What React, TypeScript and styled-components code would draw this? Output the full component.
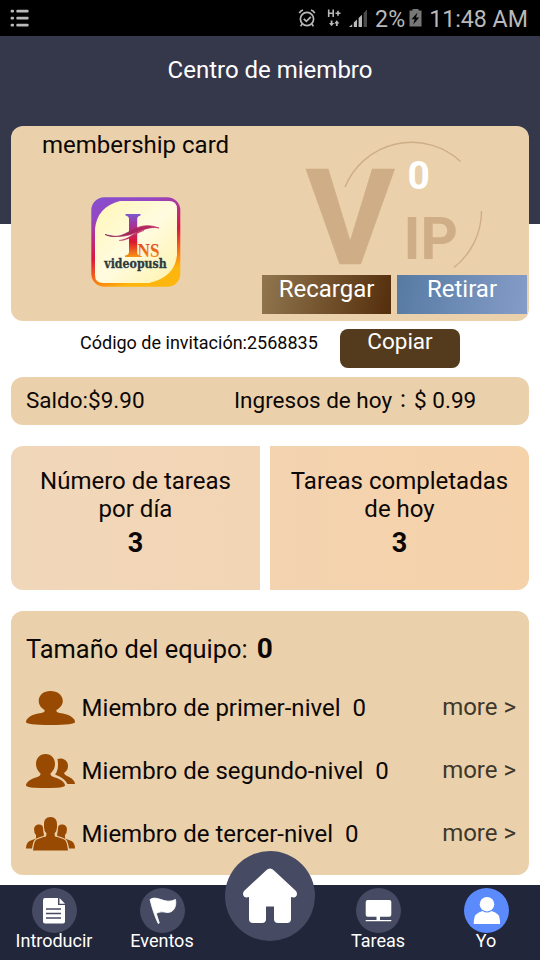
import React from 'react';
import styled, { createGlobalStyle } from 'styled-components';

const GlobalStyle = createGlobalStyle`
  * { box-sizing: border-box; }
  body { margin: 0; background: #fff; font-family: Roboto, "Noto Sans CJK JP", sans-serif; }
  svg { display: block; flex: none; }
`;

const Screen = styled.div`
  width: 540px;
  height: 960px;
  display: flex;
  flex-direction: column;
  overflow: hidden;
  background: #fff;
  color: #0c0705;
`;

const StatusBar = styled.div`
  height: 36px;
  flex: none;
  display: flex;
  align-items: center;
  justify-content: space-between;
  padding: 0 12px 0 10px;
  background: #000;
  color: #b9b9b9;
`;

const StatusGroup = styled.div`
  display: flex;
  align-items: center;
`;

const StatusIconSlot = styled.span<{ $gap: number }>`
  margin-left: ${(p) => p.$gap}px;
`;

const StatusText = styled.span<{ $gap: number }>`
  margin-left: ${(p) => p.$gap}px;
  font-size: 23.2px;
  line-height: 36px;
  padding-top: 2px;
  white-space: nowrap;
`;

const Header = styled.header`
  height: 188px;
  flex: none;
  padding-top: 20px;
  background: #35384b;
  color: #fff;
  text-align: center;
  font-size: 24px;
  line-height: 28px;
`;

const Content = styled.main`
  flex: none;
  height: 759px;
  margin-top: -98px;
  padding: 0 11px;
  display: flex;
  flex-direction: column;
`;

const MemberCard = styled.section`
  height: 195px;
  flex: none;
  display: grid;
  grid-template-columns: 251px 1fr;
  border-radius: 12px;
  background: #ead1ac;
`;

const CardIdentity = styled.div`
  padding-top: 5px;
`;

const CardTitle = styled.div`
  padding-left: 31px;
  font-size: 24px;
  line-height: 28px;
`;

const Logo = styled.svg`
  margin: 38px 0 0 80px;
`;

const CardLevel = styled.div`
  display: flex;
  flex-direction: column;
`;

const Emblem = styled.svg`
  overflow: visible;
`;

const Actions = styled.div`
  display: flex;
  gap: 6px;
  z-index: 1;
`;

const Action = styled.button<{ $from: string; $to: string; $width: number }>`
  width: ${(p) => p.$width}px;
  height: 39px;
  display: flex;
  justify-content: center;
  align-items: flex-start;
  border: 0;
  padding: 0;
  background: linear-gradient(100deg, ${(p) => p.$from}, ${(p) => p.$to});
  color: #fff;
  font: 24px/28px Roboto, sans-serif;
`;

const InviteRow = styled.div`
  height: 56px;
  flex: none;
  display: flex;
  align-items: flex-start;
  padding: 8px 0 0 69px;
`;

const InviteCode = styled.span`
  width: 260px;
  padding-top: 3px;
  font-size: 18px;
  line-height: 21px;
  white-space: nowrap;
`;

const CopyButton = styled.button`
  width: 120px;
  height: 39px;
  display: flex;
  justify-content: center;
  align-items: flex-start;
  border: 0;
  border-radius: 8px;
  padding: 0;
  background: #553b1d;
  color: #fff;
  font: 22.5px/25px Roboto, sans-serif;
`;

const BalanceBar = styled.section`
  height: 48px;
  flex: none;
  display: grid;
  grid-template-columns: 208px 1fr;
  padding-left: 15px;
  border-radius: 12px;
  background: #ead1ac;
  font-size: 22.5px;
  line-height: 47px;
  white-space: nowrap;
`;

const WideColon = styled.span`
  display: inline-block;
  width: 22px;
  text-align: center;
  font-size: 19px;
  line-height: 20px;
`;

const TaskGrid = styled.section`
  height: 144px;
  flex: none;
  display: grid;
  grid-template-columns: 249px 259px;
  gap: 10px;
  margin-top: 21px;
`;

const TaskCard = styled.div<{ $side: 'left' | 'right' }>`
  display: flex;
  flex-direction: column;
  align-items: center;
  padding-top: 21px;
  text-align: center;
  font-size: 24px;
  line-height: 28px;
  white-space: pre-line;
  border-radius: ${(p) => (p.$side === 'left' ? '12px 0 0 12px' : '0 12px 12px 0')};
  background: ${(p) =>
    p.$side === 'left'
      ? 'linear-gradient(90deg, #f1d7ba, #f2d5b4)'
      : 'linear-gradient(90deg, #f3d3b0, #f5d2aa)'};
`;

const TaskCount = styled.strong`
  font-size: 27px;
  line-height: 32px;
  margin-top: 4px;
`;

const TeamCard = styled.section`
  height: 264px;
  flex: none;
  margin-top: 21px;
  padding: 23px 13px 0 15px;
  border-radius: 12px;
  background: #ead1ac;
`;

const TeamTitle = styled.div`
  display: flex;
  align-items: baseline;
  gap: 9px;
  height: 30px;
  font-size: 25.4px;
  line-height: 30px;
  white-space: nowrap;

  strong { font-size: 28px; }
`;

const TeamList = styled.div`
  padding-top: 12px;
`;

const TeamRow = styled.div`
  height: 63px;
  display: flex;
  align-items: center;
  font-size: 24px;
  line-height: 28px;
`;

const TeamLabel = styled.span`
  flex: 1;
  padding-left: 6.6px;
  white-space: pre;
`;

const MoreLink = styled.span`
  color: #40372b;
  padding-bottom: 2px;
`;

const NavBar = styled.nav`
  height: 75px;
  flex: none;
  display: grid;
  grid-template-columns: repeat(5, 108px);
  background: #22263a;
  color: #fff;
`;

const NavItem = styled.div`
  display: flex;
  flex-direction: column;
  align-items: center;
  padding-top: 3px;
  font-size: 18px;
  line-height: 21px;
`;

const NavLabel = styled.span`
  margin-top: -3px;
  z-index: 1;
`;

const NavIcon = styled.div<{ $active?: boolean }>`
  width: 45px;
  height: 45px;
  flex: none;
  border-radius: 50%;
  background: ${(p) => (p.$active ? '#5a8afb' : '#464a62')};
`;

const HomeButton = styled.div`
  width: 90px;
  height: 90px;
  justify-self: center;
  margin-top: -34px;
  z-index: 1;
  border-radius: 50%;
  background: #464a62;
`;

const MenuIcon = () => (
  <svg width="20" height="18" viewBox="0 0 20 18" fill="#b9b9b9">
    {[0.8, 7.8, 14.8].map((y) => (
      <g key={y}>
        <rect x="0.6" y={y} width="3.4" height="2.8" rx="1" />
        <rect x="6.3" y={y} width="12.3" height="2.8" rx="1" />
      </g>
    ))}
  </svg>
);

const AlarmIcon = () => (
  <svg width="18" height="20" viewBox="0 0 18 20" fill="none" stroke="#b9b9b9" strokeWidth="1.7">
    <circle cx="9" cy="11" r="6.6" />
    <path d="M1.3 5.2Q2.4 2.8 5 2M16.7 5.200Q15.600 2.800 13 2M5.800 10.800l2.600 2.600 4.400-4.600M4.200 16l-1.600 2.200M13.800 16l1.600 2.200" />
  </svg>
);

const NetworkIcon = () => (
  <svg width="15" height="20" viewBox="0 0 15 20" fill="none" stroke="#b9b9b9" strokeWidth="1.6">
    <path d="M1.7 1.500v7.500M6.200 1.500v7.500M1.700 5.200h4.500M8.500 5.200h5M11 2.700v5" />
    <path d="M4.600 12.500v4M9.800 18v-4" strokeWidth="1.800" />
    <path d="M2 15h5.200l-2.600 3.300zM7.200 15.600h5.200l-2.600-3.300z" fill="#b9b9b9" stroke="none" />
  </svg>
);

const SignalIcon = () => (
  <svg width="19" height="19" viewBox="0 0 19 19" fill="#b9b9b9">
    <path d="M0 18l3.2-2.800V18zM4.800 13.500l3.200-3V18H4.800zM9.600 9l3.400-3.200V18H9.600z" />
    <path d="M14.600 4L18 .5V18h-3.400z" fill="#4b4b4b" />
  </svg>
);

const BatteryIcon = () => (
  <svg width="13" height="20" viewBox="0 0 13 20">
    <path d="M3.500 1h6v1.500h3v16H.5v-16h3z" fill="#777" />
    <path d="M8.500 4.500l-6 6.700h3.200l-1.500 5.400 6-7.200H7z" fill="#050505" />
  </svg>
);

const BrandLogo = () => (
  <Logo width="90" height="90" viewBox="0 0 90 90">
    <defs>
      <linearGradient id="frame" x1="0" y1="0" x2=".35" y2="1">
        <stop offset="0" stopColor="#8450cf" />
        <stop offset=".22" stopColor="#9447c5" />
        <stop offset=".62" stopColor="#dd1640" />
        <stop offset=".86" stopColor="#fb7b10" />
        <stop offset="1" stopColor="#fdb60d" />
      </linearGradient>
      <linearGradient id="paper" x1="0" y1="0" x2="1" y2="1">
        <stop offset="0" stopColor="#fff7b6" />
        <stop offset=".5" stopColor="#fffbe0" />
        <stop offset="1" stopColor="#fff2ab" />
      </linearGradient>
      <linearGradient id="pillar" x1="0" y1="0" x2="0" y2="1">
        <stop offset="0" stopColor="#7c56d0" />
        <stop offset=".35" stopColor="#b12b86" />
        <stop offset=".65" stopColor="#dd1830" />
        <stop offset="1" stopColor="#f69411" />
      </linearGradient>
      <linearGradient id="letters" x1="0" y1="0" x2="0" y2="1">
        <stop offset="0" stopColor="#df3b22" />
        <stop offset="1" stopColor="#f5a012" />
      </linearGradient>
      <linearGradient id="wave" x1="0" y1="0" x2="1" y2="0">
        <stop offset="0" stopColor="#8c265e" />
        <stop offset="1" stopColor="#c22761" />
      </linearGradient>
    </defs>
    <rect width="89" height="89.5" x=".3" y=".3" rx="13" fill="url(#frame)" />
    <path d="M29 4H78Q86 4 86 12V58Q84 80 58 86H12Q4 86 4 78V32Q6 10 29 4Z" fill="url(#paper)" />
    <path d="M34.500 17H49.500V18.500Q46.200 19 46.200 22V55Q46.200 58 49 58.500V60H34V58.500Q38 58 38 55V22Q38 19 34.500 18.500Z" fill="url(#pillar)" />
    <path d="M24 41.500C40 43 45 31.500 60 31.500" fill="none" stroke="#fffbe0" strokeWidth="2.6" />
    <path d="M14 37.500C35 47 42 21 68 31C50 27.500 42 45 14 37.500Z" fill="url(#wave)" stroke="url(#wave)" strokeWidth=".7" />
    <path d="M28 43.500C39 42 43 34.500 53 33.500C43 36.500 40 43.500 28 43.500Z" fill="#c22761" stroke="#c22761" strokeWidth=".4" />
    <text x="46.500" y="60" fontFamily="Liberation Serif, serif" fontWeight="700" fontSize="18.5" textLength="22" lengthAdjust="spacingAndGlyphs" fill="url(#letters)">NS</text>
    <text x="13.300" y="70.700" fontFamily="DejaVu Serif, serif" fontWeight="700" fontSize="12.3" textLength="62.500" lengthAdjust="spacingAndGlyphs" fill="#2c3b3e" stroke="#2c3b3e" strokeWidth=".3">videopush</text>
  </Logo>
);

const VipEmblem = () => (
  <Emblem width="267" height="149" viewBox="262 126 267 149">
    <g fill="#cfae87" fontFamily="Roboto, sans-serif" fontWeight="700">
      <text x="305.5" y="264" fontSize="134" textLength="89.5" lengthAdjust="spacingAndGlyphs" stroke="#cfae87" strokeWidth=".6">V</text>
      <text x="403.500" y="258.700" fontSize="58.5" textLength="54.500" lengthAdjust="spacingAndGlyphs">IP</text>
    </g>
    <path d="M345 187A72 72 0 0 1 460.500 161.500M481.500 211A72 72 0 0 1 454 267.500" fill="none" stroke="#cfae87" strokeWidth="1.4" />
    <text x="418.600" y="189" textAnchor="middle" fill="#fff" fontFamily="Roboto, sans-serif" fontWeight="700" fontSize="39">0</text>
  </Emblem>
);

const sideFigure =
  'M12 7.5C15 7 16.5 8 17 10.5Q17 14 18 18L17.5 19Q10 21 8.5 23Q7 25 6 31.5H0Q0 26 3.5 24L10 21.5V18Q8 16 8 12Q8.5 8 12 7.5Z';

const teamShapes = [
  <path key="1" d="M24.500 0C31.500 0 36.800 4 36.800 10C36.800 14 34 17 30.500 19Q29 21.500 37 22.500C45 24 49 28 49 31Q49 34 24.500 34T0 31C0 28 4 24 12 22.500Q20 21.500 18.500 19C15 17 12.700 14 12.700 10C12.700 4 17.500 0 24.500 0Z" />,
  <g key="2">
    <path d="M19.500 0C25.500 0 29 4.500 29 10C29 14.500 26.500 17.500 24.500 19.500Q24 22 29 23.500C36 25.500 39 29 39 31.500Q39 34 19.500 34T0 31.500C0 29 3 25.500 10 23.500Q15 22 14.500 19.500C12.500 17.500 10 14.500 10 10C10 4.500 13.500 0 19.500 0Z" />
    <path d="M31.500 5C37 3 42 6.500 42 12Q42 16 38.500 18.500Q37 20 41 22C46 24 49 27 49 30H41.500Q39 24.500 29 20.500Q32 17 32 11Q32 7.500 31.500 5Z" />
  </g>,
  <g key="3">
    <path d="M24.500 0C29 0 31 3 31 7V10Q31 14 28.500 16.500L29 19.500Q36 21 39 23Q41 24.500 42 33.500H7Q8 24.500 10 23Q13 21 20 19.500L20.500 16.500Q18 14 18 10V7C18 3 20 0 24.500 0Z" />
    <path d={sideFigure} />
    <path transform="translate(49 0) scale(-1 1)" d={sideFigure} />
  </g>,
];

const levels = ['Miembro de primer-nivel', 'Miembro de segundo-nivel', 'Miembro de tercer-nivel'];

const IntroGlyph = () => (
  <svg width="45" height="45" viewBox="0 0 45 45">
    <path d="M13 10H26V17H33V33.500Q33 35.500 31 35.500H13Q11 35.500 11 33.500V12Q11 10 13 10ZM27.500 10L33 15.800H27.500Z" fill="#fff" />
    <path d="M14 21h15M14 25.500h15M14 30h15" stroke="#464a62" strokeWidth="1.4" />
  </svg>
);

const EventsGlyph = () => (
  <svg width="45" height="45" viewBox="0 0 45 45">
    <path d="M10 11.500C18 6.500 24 17 35.500 11.500C37 19 33 25 27 24.500C22.500 23.500 19.500 23.500 16.300 25.500L19.300 35L18.200 35.500C15 29 12 20 10 11.500Z" fill="#fff" stroke="#fff" strokeWidth=".8" strokeLinejoin="round" />
  </svg>
);

const TasksGlyph = () => (
  <svg width="45" height="45" viewBox="0 0 45 45" fill="#fff">
    <rect x="9.7" y="12" width="25.6" height="16.7" rx="2" />
    <path d="M20.500 28h3.500v4h11.300v1.200H9.700V32h10.800z" />
  </svg>
);

const ProfileGlyph = () => (
  <svg width="45" height="45" viewBox="0 0 45 45" fill="#fff">
    <circle cx="23" cy="16.2" r="7.3" />
    <path d="M9.800 36V33Q10 25 18.500 23Q23 26 27.500 23Q36 25 36 33V36Z" />
  </svg>
);

const HomeGlyph = () => (
  <svg width="90" height="90" viewBox="0 0 90 90">
    <path d="M41 19.500Q45 15.500 49 19.500L71 40Q73 43 71 45.500Q69.500 47 66 46V68Q66 72 62 72H53Q49 72 49 68V55.500H41V68Q41 72 37 72H28Q24 72 24 68V46Q20.500 47 19 45.500Q17 43 19 40Z" fill="#fff" />
  </svg>
);

export default function App() {
  return (
    <Screen>
      <GlobalStyle />
      <StatusBar>
        <MenuIcon />
        <StatusGroup>
          <AlarmIcon />
          <StatusIconSlot $gap={11}><NetworkIcon /></StatusIconSlot>
          <StatusIconSlot $gap={7}><SignalIcon /></StatusIconSlot>
          <StatusText $gap={7}>2%</StatusText>
          <StatusIconSlot $gap={4}><BatteryIcon /></StatusIconSlot>
          <StatusText $gap={7}>11:48 AM</StatusText>
        </StatusGroup>
      </StatusBar>
      <Header>Centro de miembro</Header>
      <Content>
        <MemberCard>
          <CardIdentity>
            <CardTitle>membership card</CardTitle>
            <BrandLogo />
          </CardIdentity>
          <CardLevel>
            <VipEmblem />
            <Actions>
              <Action $from="#90764f" $to="#552e0c" $width={129}>Recargar</Action>
              <Action $from="#567aa3" $to="#859dc8" $width={130}>Retirar</Action>
            </Actions>
          </CardLevel>
        </MemberCard>
        <InviteRow>
          <InviteCode>Código de invitación:2568835</InviteCode>
          <CopyButton>Copiar</CopyButton>
        </InviteRow>
        <BalanceBar>
          <span>Saldo:$9.90</span>
          <span>Ingresos de hoy<WideColon>：</WideColon>$ 0.99</span>
        </BalanceBar>
        <TaskGrid>
          <TaskCard $side="left">
            {'Número de tareas\npor día'}
            <TaskCount>3</TaskCount>
          </TaskCard>
          <TaskCard $side="right">
            {'Tareas completadas\nde hoy'}
            <TaskCount>3</TaskCount>
          </TaskCard>
        </TaskGrid>
        <TeamCard>
          <TeamTitle>
            <span>Tamaño del equipo:</span>
            <strong>0</strong>
          </TeamTitle>
          <TeamList>
            {levels.map((label, i) => (
              <TeamRow key={label}>
                <svg width="49" height="34" viewBox="0 0 49 34" fill="#984a02">{teamShapes[i]}</svg>
                <TeamLabel>{`${label}  0`}</TeamLabel>
                <MoreLink>more &gt;</MoreLink>
              </TeamRow>
            ))}
          </TeamList>
        </TeamCard>
      </Content>
      <NavBar>
        <NavItem><NavIcon><IntroGlyph /></NavIcon><NavLabel>Introducir</NavLabel></NavItem>
        <NavItem><NavIcon><EventsGlyph /></NavIcon><NavLabel>Eventos</NavLabel></NavItem>
        <HomeButton><HomeGlyph /></HomeButton>
        <NavItem><NavIcon><TasksGlyph /></NavIcon><NavLabel>Tareas</NavLabel></NavItem>
        <NavItem><NavIcon $active><ProfileGlyph /></NavIcon><NavLabel>Yo</NavLabel></NavItem>
      </NavBar>
    </Screen>
  );
}
